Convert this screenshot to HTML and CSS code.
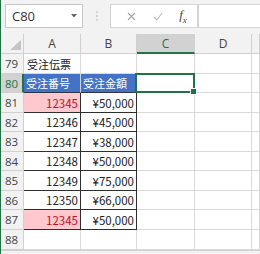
FILE: index.html
```html
<!DOCTYPE html>
<html lang="ja">
<head>
    <meta charset="UTF-8">
    <title>受注伝票</title>
    <link rel="stylesheet" href="styles.css">
</head>
<body>
    <div class="app">
        <div class="formula-bar">
            <div class="namebox">
                <span>C80</span>
                <svg class="drop" width="6" height="4" viewBox="0 0 6 4"><path d="M0 0h6L3 3.5z" fill="#666"/></svg>
            </div>
            <div class="grip">
                <svg width="2" height="10" viewBox="0 0 2 10"><circle cx="1" cy="1" r="0.8" fill="#b0b0b0"/><circle cx="1" cy="5" r="0.8" fill="#b0b0b0"/><circle cx="1" cy="9" r="0.8" fill="#b0b0b0"/></svg>
            </div>
            <div class="fx-buttons">
                <svg width="9" height="9" viewBox="0 0 9 9"><path d="M1 1l7 7M8 1L1 8" stroke="#a6a6a6" stroke-width="1.1"/></svg>
                <svg width="10" height="9" viewBox="0 0 10 9"><path d="M1 5l3 3 5-7" stroke="#b8b8b8" stroke-width="1.1" fill="none"/></svg>
                <span class="fx">f<sub>x</sub></span>
            </div>
            <div class="fx-input"></div>
        </div>

        <div class="sheet">
            <div class="hd corner"><span class="tri"></span></div>
            <div class="hd col">A</div>
            <div class="hd col">B</div>
            <div class="hd col sel">C</div>
            <div class="hd col">D</div>
            <div class="hd col"></div>

            <div class="hd row">79</div>
            <div class="cell text">受注伝票</div>
            <div class="cell"></div>
            <div class="cell"></div>
            <div class="cell"></div>
            <div class="cell"></div>

            <div class="hd row sel">80</div>
            <div class="cell head">受注番号</div>
            <div class="cell head">受注金額</div>
            <div class="cell active"></div>
            <div class="cell"></div>
            <div class="cell"></div>

            <div class="hd row">81</div>
            <div class="cell num b dup">12345</div>
            <div class="cell num b">¥50,000</div>
            <div class="cell"></div>
            <div class="cell"></div>
            <div class="cell"></div>

            <div class="hd row">82</div>
            <div class="cell num b">12346</div>
            <div class="cell num b">¥45,000</div>
            <div class="cell"></div>
            <div class="cell"></div>
            <div class="cell"></div>

            <div class="hd row">83</div>
            <div class="cell num b">12347</div>
            <div class="cell num b">¥38,000</div>
            <div class="cell"></div>
            <div class="cell"></div>
            <div class="cell"></div>

            <div class="hd row">84</div>
            <div class="cell num b">12348</div>
            <div class="cell num b">¥50,000</div>
            <div class="cell"></div>
            <div class="cell"></div>
            <div class="cell"></div>

            <div class="hd row">85</div>
            <div class="cell num b">12349</div>
            <div class="cell num b">¥75,000</div>
            <div class="cell"></div>
            <div class="cell"></div>
            <div class="cell"></div>

            <div class="hd row">86</div>
            <div class="cell num b">12350</div>
            <div class="cell num b">¥66,000</div>
            <div class="cell"></div>
            <div class="cell"></div>
            <div class="cell"></div>

            <div class="hd row">87</div>
            <div class="cell num b dup">12345</div>
            <div class="cell num b">¥50,000</div>
            <div class="cell"></div>
            <div class="cell"></div>
            <div class="cell"></div>

            <div class="hd row">88</div>
            <div class="cell"></div>
            <div class="cell"></div>
            <div class="cell"></div>
            <div class="cell"></div>
            <div class="cell"></div>
        </div>
    </div>
</body>
</html>
```

FILE: styles.css
```css
* {
    box-sizing: border-box;
}
body {
    margin: 0;
    width: 260px;
    height: 254px;
    overflow: hidden;
    background: #f2f2f2;
    font-family: 'Open Sans', 'Liberation Sans', sans-serif;
    color: #333;
}
.app {
    height: 254px;
    border-left: 1px solid #217346;
}
.formula-bar {
    display: flex;
    align-items: stretch;
    height: 34px;
    padding: 4px 0 6px 4px;
}
.namebox {
    width: 78px;
    background: #fff;
    border: 1px solid #c6c6c6;
    display: flex;
    align-items: center;
    justify-content: space-between;
    padding: 0 5px 0 6px;
    font-size: 13px;
    color: #333;
}
.grip {
    width: 27px;
    display: flex;
    align-items: center;
    justify-content: center;
}
.fx-buttons {
    width: 88px;
    background: #fff;
    border: 1px solid #d4d4d4;
    display: flex;
    align-items: center;
    justify-content: space-around;
    padding: 0 2px 0 8px;
}
.fx {
    font-family: 'Liberation Serif', serif;
    font-style: italic;
    font-size: 13px;
    color: #444;
}
.fx sub {
    font-size: 9px;
}
.fx-input {
    flex: 1;
    background: #fff;
    border: 1px solid #d4d4d4;
    border-right: none;
}
.sheet {
    display: grid;
    grid-template-columns: 23px 57px 56px 58px 57px 1fr;
    grid-template-rows: 20px 20px 19px 20px 19px 20px 19px 20px 19px 20px 20px;
    background: #fff;
    border-bottom: 1px solid #d0d0d0;
}
.hd {
    background: #f2f2f2;
    border-right: 1px solid #d0d0d0;
    border-bottom: 1px solid #d0d0d0;
    font-size: 12px;
    color: #444;
    display: flex;
    align-items: center;
    justify-content: center;
}
.hd.row {
    justify-content: flex-start;
    padding-left: 4px;
    font-size: 11.5px;
}
.hd.sel {
    background: #d2d2d2;
    color: #217346;
}
.hd.col.sel {
    border-bottom: 2px solid #217346;
}
.hd.row.sel {
    border-right: 2px solid #217346;
}
.corner {
    position: relative;
}
.tri {
    position: absolute;
    right: 2px;
    bottom: 3px;
    width: 0;
    height: 0;
    border-left: 11px solid transparent;
    border-bottom: 10px solid #c4c4c4;
}
.cell {
    border-right: 1px solid #d9d9d9;
    border-bottom: 1px solid #d9d9d9;
    font-family: 'Noto Sans CJK JP', sans-serif;
    font-size: 11px;
    color: #222;
    display: flex;
    align-items: center;
    white-space: nowrap;
    overflow: hidden;
}
.text {
    padding-left: 3px;
    overflow: visible;
}
.head {
    background: #4472c4;
    color: #fff;
    padding-left: 2px;
    border-right-color: #c9d3e8;
    border-bottom-color: #2f3640;
}
.num {
    justify-content: flex-end;
    padding-right: 2px;
    font-size: 11.5px;
}
.b {
    border-right-color: #2e2e2e;
    border-bottom-color: #2e2e2e;
}
.dup {
    background: #ffc7ce;
    color: #c0101e;
}
.active {
    position: relative;
    overflow: visible;
}
.active::after {
    content: '';
    position: absolute;
    left: -2px;
    top: -1px;
    right: -1px;
    bottom: -1px;
    border: 2px solid #217346;
}
.active::before {
    content: '';
    position: absolute;
    right: -3px;
    bottom: -3px;
    width: 5px;
    height: 5px;
    background: #217346;
    border: 1px solid #fff;
    z-index: 1;
}
```
